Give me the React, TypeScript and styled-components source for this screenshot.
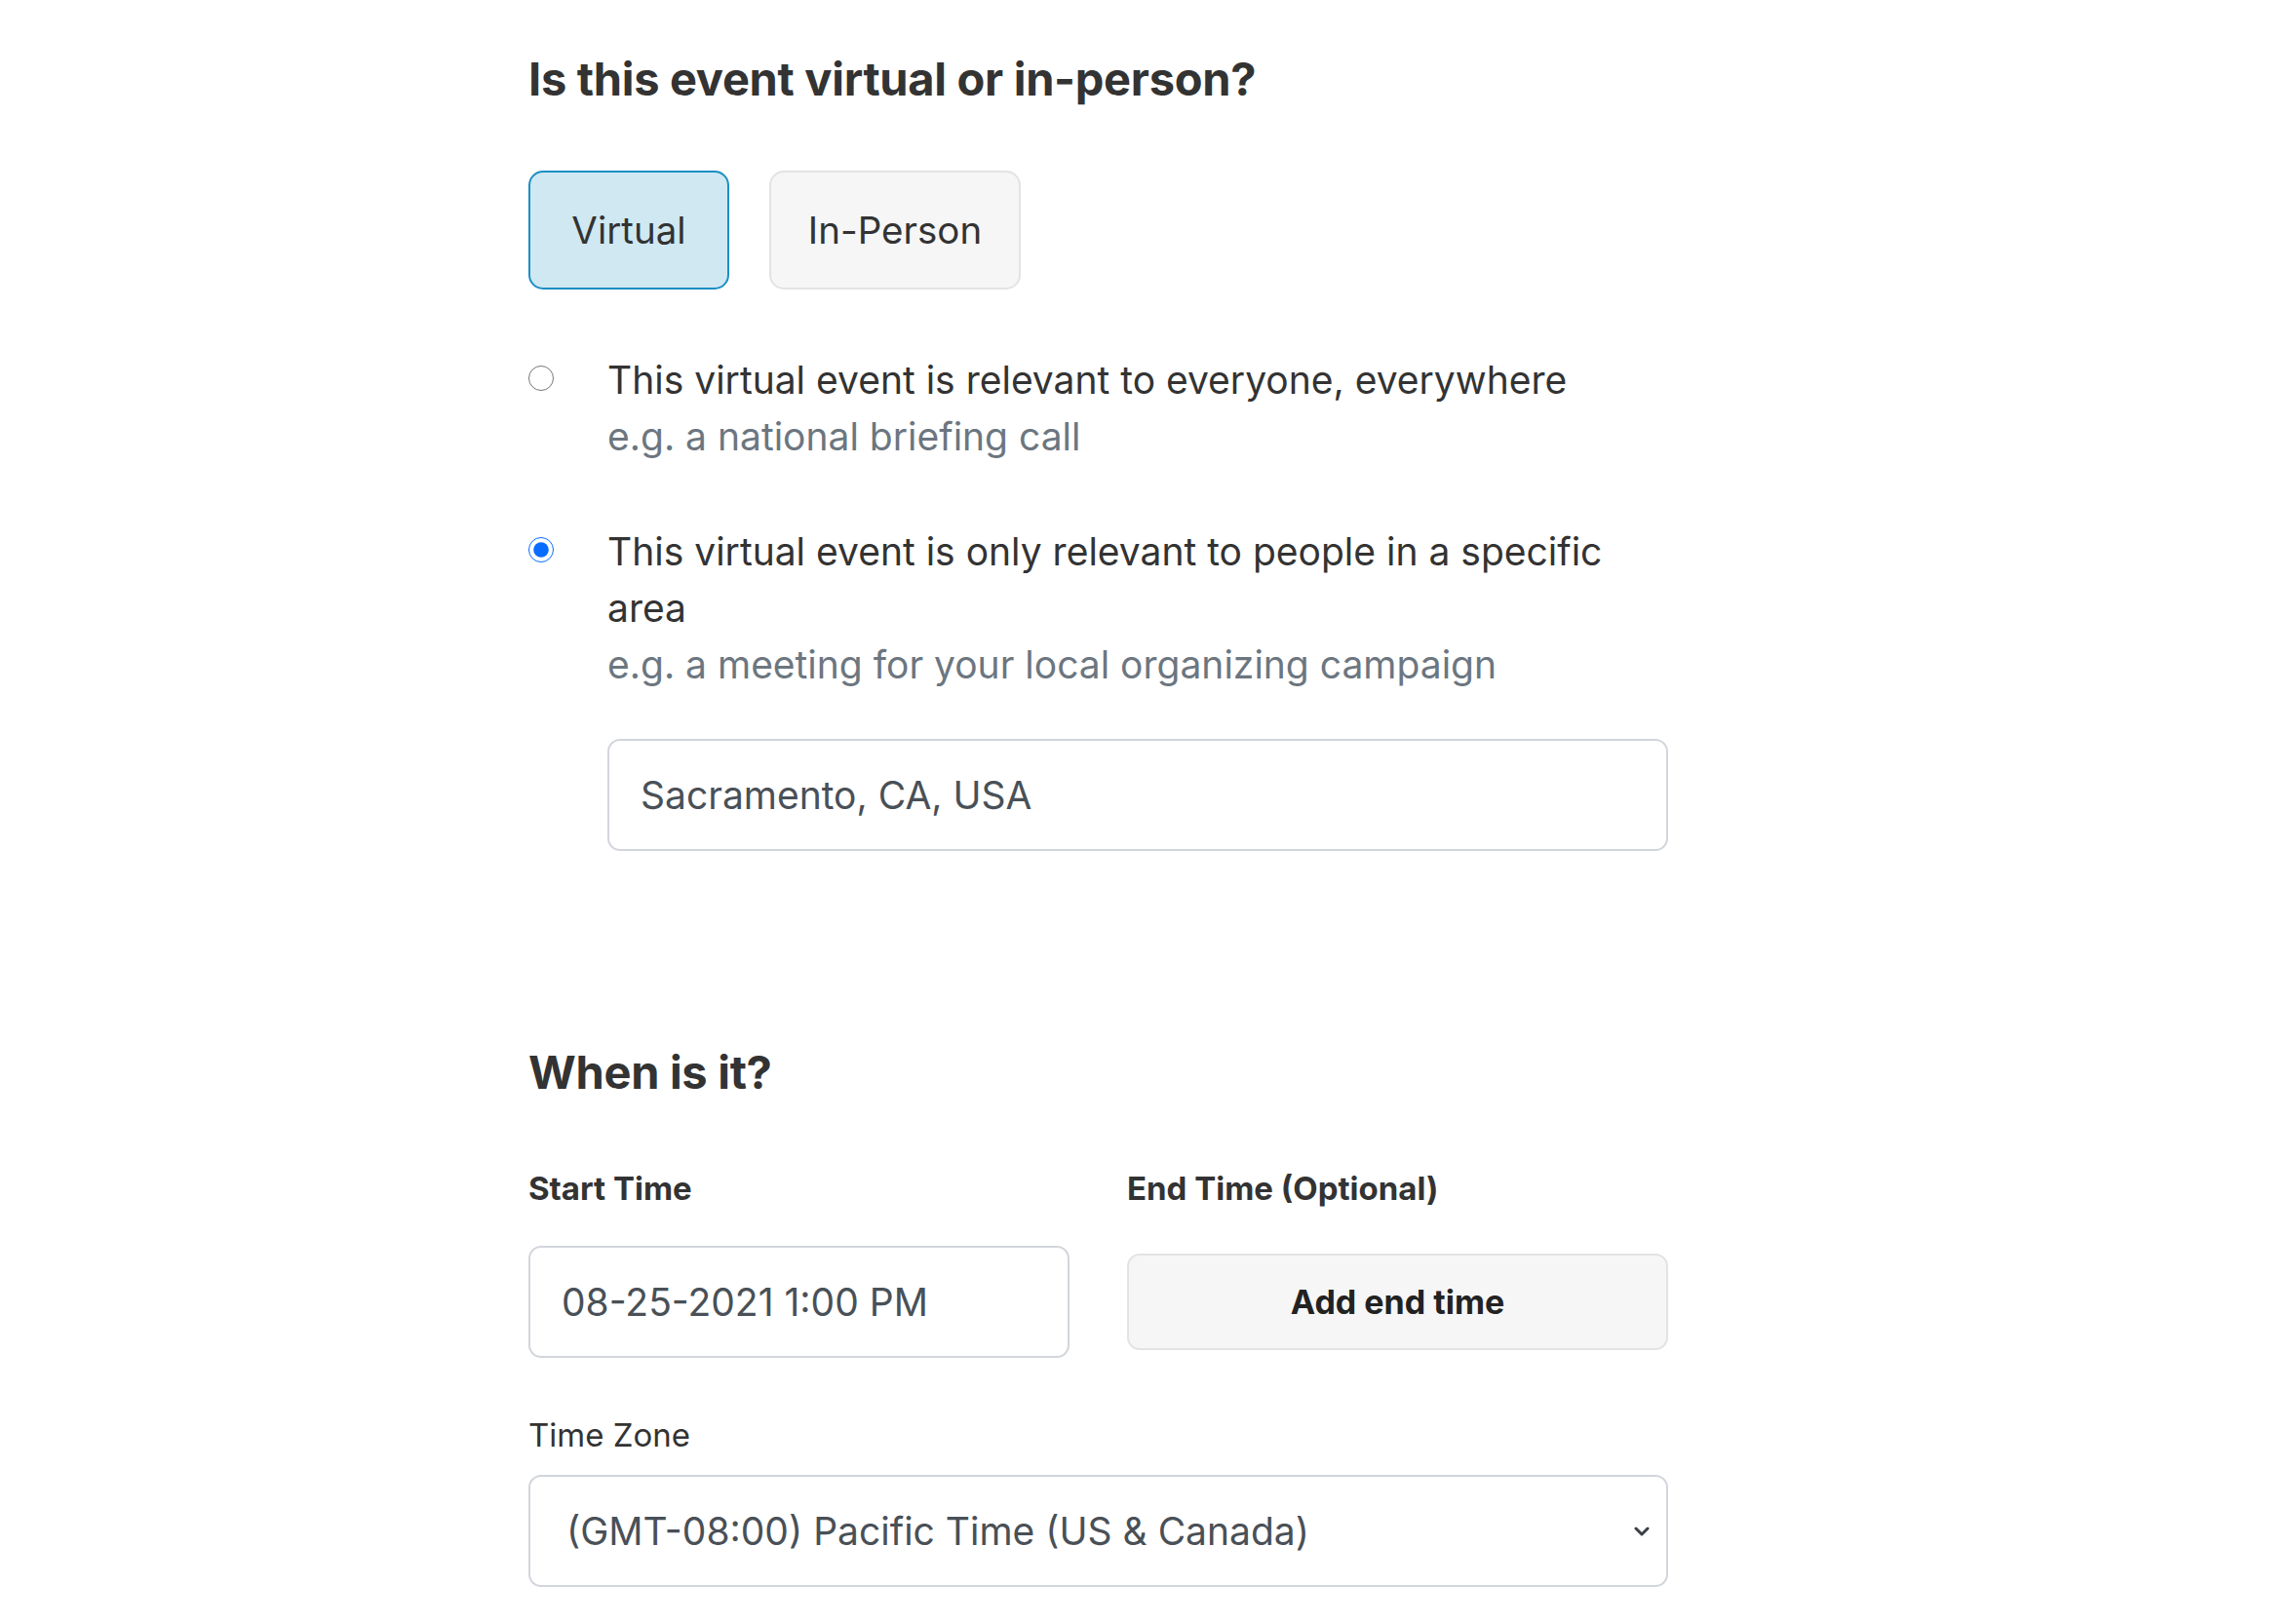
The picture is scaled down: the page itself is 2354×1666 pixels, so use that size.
import React from "react";
import styled, { createGlobalStyle } from "styled-components";

const GlobalStyle = createGlobalStyle`
  html, body { margin: 0; padding: 0; background: #ffffff; }
  body {
    font-family: Inter, "Noto Sans", "Liberation Sans", sans-serif;
    color: #333333;
  }
  * { box-sizing: border-box; }
`;

const Page = styled.main`
  padding: 53px 0 40px 542px;
  width: 1711px;
`;

const Heading = styled.h2<{ $top?: number }>`
  margin: ${(p) => p.$top ?? 0}px 0 0 0;
  font-size: 47px;
  line-height: 56px;
  font-weight: 700;
  color: #333333;
  letter-spacing: -0.3px;
`;

const ToggleRow = styled.div`
  display: flex;
  gap: 41px;
  margin-top: 66px;
`;

const ToggleButton = styled.button<{ $active?: boolean; $w: number }>`
  width: ${(p) => p.$w}px;
  height: 122px;
  border-radius: 15px;
  border: 2px solid ${(p) => (p.$active ? "#1b8fc4" : "#e3e3e3")};
  background: ${(p) => (p.$active ? "#d0e8f2" : "#f6f6f6")};
  color: #333333;
  font-family: inherit;
  font-size: 38.5px;
  font-weight: 400;
  cursor: pointer;
`;

const Options = styled.div`
  display: flex;
  flex-direction: column;
  gap: 60px;
  margin-top: 64px;
`;

const Option = styled.label`
  display: grid;
  grid-template-columns: 81px 1088px;
  align-items: start;
`;

const Radio = styled.input.attrs({ type: "radio" })`
  width: 26px;
  height: 26px;
  margin: 14px 0 0 0;
  accent-color: #0a6cff;
`;

const OptionBody = styled.div`
  display: flex;
  flex-direction: column;
`;

const OptionText = styled.span`
  font-size: 39px;
  line-height: 58px;
  color: #333333;
`;

const Hint = styled.span`
  font-size: 39px;
  line-height: 58px;
  color: #6c7680;
`;

const TextInput = styled.input<{ $top?: number; $pl?: number }>`
  display: block;
  width: 100%;
  height: 115px;
  margin-top: ${(p) => p.$top ?? 0}px;
  padding: 0 0 0 ${(p) => p.$pl ?? 32}px;
  border: 2px solid #d2d6db;
  border-radius: 13px;
  background: #ffffff;
  font-family: inherit;
  font-size: 39px;
  color: #495057;
  outline: none;
`;

const TimeGrid = styled.div`
  display: grid;
  grid-template-columns: 555px 555px;
  column-gap: 59px;
  margin-top: 71px;
  align-items: center;
`;

const FieldLabel = styled.div<{ $bold?: boolean }>`
  font-size: 33px;
  line-height: 40px;
  font-weight: ${(p) => (p.$bold ? 700 : 400)};
  color: #333333;
`;

const Cell = styled.div<{ $row: number }>`
  grid-row: ${(p) => p.$row};
  margin-top: ${(p) => (p.$row === 2 ? 39 : 0)}px;
`;

const AddButton = styled.button`
  display: block;
  width: 100%;
  height: 99px;
  border: 2px solid #e3e3e3;
  border-radius: 13px;
  background: #f6f6f6;
  font-family: inherit;
  font-size: 34px;
  font-weight: 700;
  color: #222222;
  cursor: pointer;
`;

const ZoneBlock = styled.div`
  margin-top: 59px;
  width: 1169px;
`;

const SelectWrap = styled.div`
  position: relative;
  margin-top: 21px;
`;

const Select = styled.select`
  display: block;
  width: 100%;
  height: 115px;
  padding: 0 60px 0 37px;
  appearance: none;
  border: 2px solid #d2d6db;
  border-radius: 13px;
  background: #ffffff;
  font-family: inherit;
  font-size: 39px;
  color: #495057;
  outline: none;
`;

const Chevron = styled.svg`
  position: absolute;
  right: 19px;
  top: 50%;
  width: 16px;
  height: 12px;
  transform: translateY(-50%);
  pointer-events: none;
`;

export default function App() {
  return (
    <>
      <GlobalStyle />
      <Page>
        <Heading>Is this event virtual or in-person?</Heading>
        <ToggleRow>
          <ToggleButton $active $w={206}>Virtual</ToggleButton>
          <ToggleButton $w={258}>In-Person</ToggleButton>
        </ToggleRow>

        <Options>
          <Option>
            <Radio name="scope" />
            <OptionBody>
              <OptionText>This virtual event is relevant to everyone, everywhere</OptionText>
              <Hint>e.g. a national briefing call</Hint>
            </OptionBody>
          </Option>
          <Option>
            <Radio name="scope" defaultChecked />
            <OptionBody>
              <OptionText>This virtual event is only relevant to people in a specific area</OptionText>
              <Hint>e.g. a meeting for your local organizing campaign</Hint>
              <TextInput $top={47} defaultValue="Sacramento, CA, USA" />
            </OptionBody>
          </Option>
        </Options>

        <Heading $top={199}>When is it?</Heading>

        <TimeGrid>
          <Cell $row={1}>
            <FieldLabel $bold>Start Time</FieldLabel>
          </Cell>
          <Cell $row={1}>
            <FieldLabel $bold>End Time (Optional)</FieldLabel>
          </Cell>
          <Cell $row={2}>
            <TextInput defaultValue="08-25-2021 1:00 PM" />
          </Cell>
          <Cell $row={2}>
            <AddButton>Add end time</AddButton>
          </Cell>
        </TimeGrid>

        <ZoneBlock>
          <FieldLabel>Time Zone</FieldLabel>
          <SelectWrap>
            <Select defaultValue="pt">
              <option value="pt">(GMT-08:00) Pacific Time (US &amp; Canada)</option>
              <option value="mt">(GMT-07:00) Mountain Time (US &amp; Canada)</option>
              <option value="ct">(GMT-06:00) Central Time (US &amp; Canada)</option>
              <option value="et">(GMT-05:00) Eastern Time (US &amp; Canada)</option>
            </Select>
            <Chevron viewBox="0 0 16 12">
              <path d="M2 3 L8 9 L14 3" fill="none" stroke="#3a3f45" strokeWidth="3" strokeLinecap="round" strokeLinejoin="round" />
            </Chevron>
          </SelectWrap>
        </ZoneBlock>
      </Page>
    </>
  );
}
